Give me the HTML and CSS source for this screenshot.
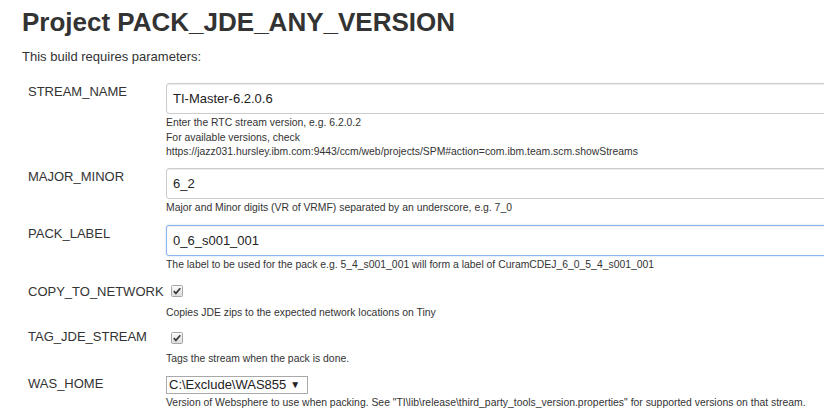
FILE: index.html
```html
<!DOCTYPE html>
<html>
<head>
<meta charset="utf-8">
<link rel="stylesheet" href="styles.css">
</head>
<body>
<div class="page">
  <h1 class="title">Project PACK_JDE_ANY_VERSION</h1>
  <p class="intro">This build requires parameters:</p>
  <div class="params">
    <div class="row">
      <div class="label">STREAM_NAME</div>
      <div class="value">
        <div class="text-input">TI-Master-6.2.0.6</div>
        <div class="desc">Enter the RTC stream version, e.g. 6.2.0.2<br>For available versions, check<br>https://jazz031.hursley.ibm.com:9443/ccm/web/projects/SPM#action=com.ibm.team.scm.showStreams</div>
      </div>
    </div>
    <div class="row">
      <div class="label">MAJOR_MINOR</div>
      <div class="value">
        <div class="text-input">6_2</div>
        <div class="desc">Major and Minor digits (VR of VRMF) separated by an underscore, e.g. 7_0</div>
      </div>
    </div>
    <div class="row row-gap-more">
      <div class="label">PACK_LABEL</div>
      <div class="value">
        <div class="text-input focused">0_6_s001_001</div>
        <div class="desc">The label to be used for the pack e.g. 5_4_s001_001 will form a label of CuramCDEJ_6_0_5_4_s001_001</div>
      </div>
    </div>
    <div class="row row-pad">
      <div class="label">COPY_TO_NETWORK</div>
      <div class="value">
        <div class="check-wrap">
          <svg class="check high" width="12" height="12" viewBox="0 0 12 12">
            <defs>
              <linearGradient id="cb1" x1="0" y1="0" x2="0" y2="1">
                <stop offset="0" stop-color="#fcfcfc"/>
                <stop offset="1" stop-color="#dcdcdc"/>
              </linearGradient>
            </defs>
            <rect x="0.5" y="0.5" width="11" height="11" rx="1" fill="url(#cb1)" stroke="#a6a6a6"/>
            <path d="M2.8 6.2 L4.9 8.4 L9.3 3.3" fill="none" stroke="#3a3a3a" stroke-width="1.7"/>
          </svg>
        </div>
        <div class="desc">Copies JDE zips to the expected network locations on Tiny</div>
      </div>
    </div>
    <div class="row">
      <div class="label">TAG_JDE_STREAM</div>
      <div class="value">
        <div class="check-wrap short">
          <svg class="check low" width="12" height="12" viewBox="0 0 12 12">
            <defs>
              <linearGradient id="cb2" x1="0" y1="0" x2="0" y2="1">
                <stop offset="0" stop-color="#fcfcfc"/>
                <stop offset="1" stop-color="#dcdcdc"/>
              </linearGradient>
            </defs>
            <rect x="0.5" y="0.5" width="11" height="11" rx="1" fill="url(#cb2)" stroke="#a6a6a6"/>
            <path d="M2.8 6.2 L4.9 8.4 L9.3 3.3" fill="none" stroke="#3a3a3a" stroke-width="1.7"/>
          </svg>
        </div>
        <div class="desc">Tags the stream when the pack is done.</div>
      </div>
    </div>
    <div class="row">
      <div class="label">WAS_HOME</div>
      <div class="value">
        <div class="select"><span class="select-text">C:\Exclude\WAS855</span><span class="select-arrow">▼</span></div>
        <div class="desc desc-select">Version of Websphere to use when packing. See "TI\lib\release\third_party_tools_version.properties" for supported versions on that stream.</div>
      </div>
    </div>
  </div>
</div>
</body>
</html>
```

FILE: styles.css
```css
html, body {
  margin: 0;
  padding: 0;
  overflow: hidden;
  background: #ffffff;
}

body {
  font-family: "Liberation Sans", Arial, sans-serif;
  color: #333333;
}

.page {
  padding: 0 22px;
  width: 1000px;
}

.title {
  margin: 6px 0 0;
  font-size: 26px;
  line-height: 32px;
  font-weight: bold;
  color: #333333;
}

.intro {
  margin: 10px 0 0;
  font-size: 13px;
  line-height: 18px;
}

.params {
  padding-top: 17px;
}

.row {
  display: flex;
  align-items: flex-start;
  margin-bottom: 8px;
}

.row-gap-more {
  padding-top: 1px;
}

.row-pad {
  padding-top: 2px;
}

.label {
  width: 144px;
  flex: none;
  box-sizing: border-box;
  padding-left: 6px;
  font-size: 13px;
  line-height: 17px;
  white-space: nowrap;
}

.value {
  flex: 1;
  min-width: 0;
}

.text-input {
  box-sizing: border-box;
  width: 700px;
  height: 31px;
  border: 1px solid #cccccc;
  border-radius: 3px;
  box-shadow: inset 0 1px 1px rgba(0, 0, 0, 0.075);
  padding: 0 6px;
  font-size: 13px;
  line-height: 29px;
  color: #222222;
  background: #ffffff;
}

.text-input.focused {
  border-color: #8db6ec;
  box-shadow: inset 0 1px 1px rgba(0, 0, 0, 0.075), 0 0 2px rgba(102, 160, 233, 0.5);
}

.desc {
  margin-top: 2px;
  font-size: 10.4px;
  line-height: 14.7px;
  color: #333333;
  white-space: nowrap;
}

.check-wrap {
  height: 21px;
}

.check-wrap.short {
  height: 20px;
}

.check {
  display: block;
  margin-left: 5px;
}

.check.high {
  margin-top: 2px;
}

.check.low {
  margin-top: 4px;
}

.check-wrap + .desc {
  margin-top: 0;
}

.select {
  display: inline-flex;
  align-items: center;
  box-sizing: border-box;
  height: 18px;
  width: 142px;
  border: 1px solid #a9a9a9;
  background: #ffffff;
  padding-left: 2px;
  font-size: 13px;
  color: #222222;
}

.select-text {
  line-height: 16px;
}

.select-arrow {
  font-size: 10px;
  margin-left: 4px;
  color: #222222;
}

.desc-select {
  margin-top: 2px;
}
```
